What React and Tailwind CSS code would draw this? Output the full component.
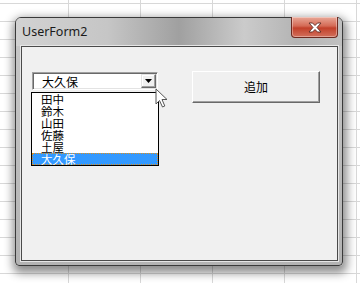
import React from 'react';

const ITEMS = ['田中', '鈴木', '山田', '佐藤', '土屋', '大久保'];

const jp = "font-['Noto_Sans_CJK_JP','Noto_Sans',sans-serif]";

const App = () => {
    return (
        <div className="relative w-[360px] h-[283px] overflow-hidden bg-white pl-[15px] pt-[17px] [background-image:linear-gradient(to_right,#d8d8d8_1px,transparent_1px),linear-gradient(to_bottom,#d8d8d8_1px,transparent_1px)] [background-size:72px_18px] [background-position:68px_3px]">
            {/* ウィンドウ */}
            <div className="relative w-[328px] h-[249px] flex flex-col rounded-t-[6px] rounded-b-[4px] border border-[#3a3a3a] bg-[linear-gradient(to_bottom,#c9c9c9,#b3b3b3)] shadow-[1px_4px_10px_3px_rgba(0,0,0,0.45)]">
                {/* タイトルバー */}
                <div className="h-[28px] shrink-0 flex items-start rounded-t-[5px] pl-[6px] pr-[4px] bg-[linear-gradient(to_right,#d2d2d2_0%,#c6c6c6_28%,#a0a0a0_50%,#cbcbcb_70%,#b4b4b4_86%,#c0c0c0_100%)]">
                    <span className="mt-[6px] flex-1 text-[12.5px] leading-[16px] text-[#1a1a1a] font-['Noto_Sans',sans-serif]">UserForm2</span>
                    <div className="-mt-px w-[47px] h-[21px] flex items-center justify-center rounded-b-[4px] border border-t-0 border-[#6e2a20] bg-[linear-gradient(to_bottom,#e9a898_0%,#d46a55_45%,#c2402a_55%,#d2705c_100%)] shadow-[inset_0_0_0_1px_rgba(255,255,255,0.35)]">
                        <svg width="14" height="11" viewBox="0 0 14 11">
                            <path d="M1 1 L4.5 1 L7 3.5 L9.5 1 L13 1 L9 5.5 L13 10 L9.5 10 L7 7.5 L4.5 10 L1 10 L5 5.5 Z" fill="#ffffff" stroke="#5a2a24" strokeWidth="0.9" strokeLinejoin="round" />
                        </svg>
                    </div>
                </div>

                {/* クライアント領域 */}
                <div className="flex-1 ml-[5px] mr-[4px] mb-[4px] border border-[#4a4a4a] bg-[#f0f0f0] shadow-[0_0_0_1px_#e6e6e6]">
                    <div className="flex items-start gap-[33px] pl-[9px] pt-[25px]">
                        {/* コンボボックス */}
                        <div className="flex flex-col w-[128px]">
                            <div className="ml-px w-[126px] h-[18px] flex border border-t-[#a0a0a0] border-l-[#a0a0a0] border-b-white border-r-white bg-white shadow-[inset_1px_1px_0_#696969,inset_-1px_-1px_0_#e3e3e3]">
                                <span className={`flex-1 pl-[9px] pt-px text-[12px] leading-[15px] text-black ${jp}`}>大久保</span>
                                <div className="mt-px mr-px w-[15px] h-[14px] flex items-center justify-center bg-[#f0f0f0] border border-t-[#e3e3e3] border-l-[#e3e3e3] border-b-[#696969] border-r-[#696969] shadow-[inset_-1px_-1px_0_#a0a0a0,inset_1px_1px_0_#ffffff]">
                                    <svg width="7" height="4" viewBox="0 0 7 4">
                                        <path d="M0 0 H7 L3.5 4 Z" fill="#000" />
                                    </svg>
                                </div>
                            </div>

                            {/* ドロップダウンリスト */}
                            <div className="mt-[2px] w-[128px] border border-black bg-white">
                                {ITEMS.map((name, i) => (
                                    <div
                                        key={name}
                                        className={
                                            i === ITEMS.length - 1
                                                ? `h-[12px] pl-[8px] text-[11.5px] leading-[10px] text-white bg-[#3399ff] border border-dotted border-[#e0901c] ${jp}`
                                                : `h-[12px] pl-[9px] text-[11.5px] leading-[12px] text-black ${jp}`
                                        }
                                    >
                                        {name}
                                    </div>
                                ))}
                            </div>
                        </div>

                        {/* 追加ボタン */}
                        <button className={`-mt-px w-[128px] h-[32px] flex items-center justify-center bg-[#f0f0f0] border border-t-white border-l-white border-b-[#696969] border-r-[#696969] shadow-[inset_-1px_-1px_0_#a0a0a0] text-[12px] text-black ${jp}`}>
                            追加
                        </button>
                    </div>
                </div>
            </div>

            {/* マウスカーソル */}
            <svg className="absolute left-[155px] top-[88px]" width="13" height="20" viewBox="0 0 13 20">
                <path d="M1 1 L1 16 L4.5 12.5 L7.5 19 L9.8 18 L7 11.5 L12 11.5 Z" fill="#ffffff" stroke="#555" strokeWidth="1" strokeLinejoin="round" />
            </svg>
        </div>
    );
};

export default App;
